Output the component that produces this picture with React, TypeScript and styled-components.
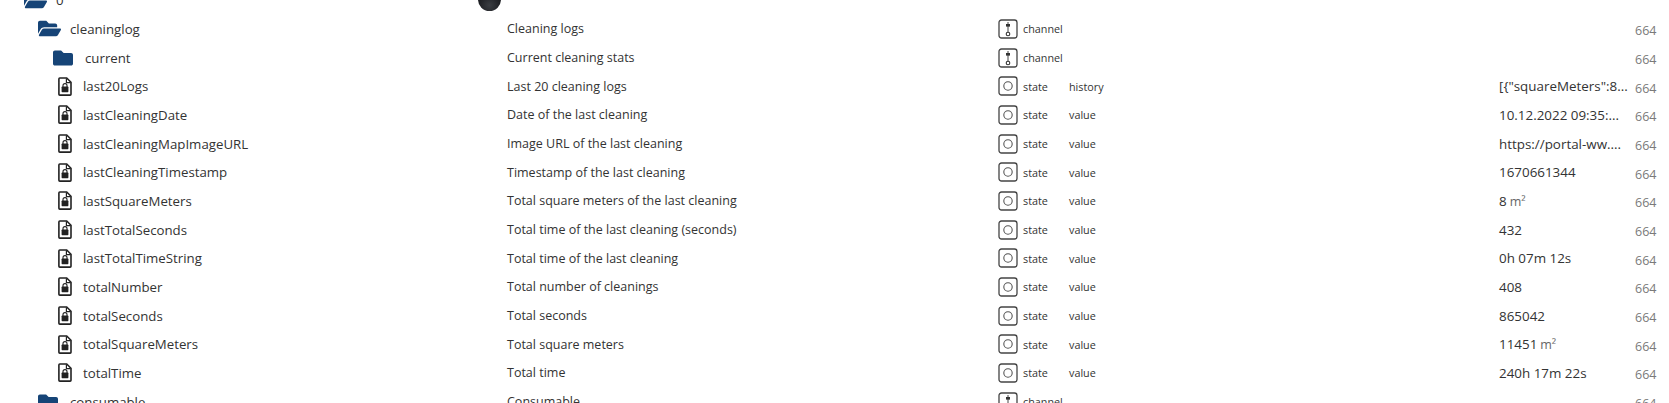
import React from "react";
import styled, { createGlobalStyle } from "styled-components";
import { FaFolder, FaFolderOpen } from "react-icons/fa";

type Row = {
  name: string;
  level: number;
  kind: "open" | "closed" | "state";
  desc?: string;
  type?: "channel" | "state";
  role?: string;
  value?: string;
  unit?: string;
};

const rows: Row[] = [
  { name: "0", level: 0, kind: "open" },
  { name: "cleaninglog", level: 1, kind: "open", desc: "Cleaning logs", type: "channel" },
  { name: "current", level: 2, kind: "closed", desc: "Current cleaning stats", type: "channel" },
  { name: "last20Logs", level: 2, kind: "state", desc: "Last 20 cleaning logs", type: "state", role: "history", value: '[{"squareMeters":8...' },
  { name: "lastCleaningDate", level: 2, kind: "state", desc: "Date of the last cleaning", type: "state", role: "value", value: "10.12.2022 09:35:..." },
  { name: "lastCleaningMapImageURL", level: 2, kind: "state", desc: "Image URL of the last cleaning", type: "state", role: "value", value: "https://portal-ww...." },
  { name: "lastCleaningTimestamp", level: 2, kind: "state", desc: "Timestamp of the last cleaning", type: "state", role: "value", value: "1670661344" },
  { name: "lastSquareMeters", level: 2, kind: "state", desc: "Total square meters of the last cleaning", type: "state", role: "value", value: "8", unit: "m²" },
  { name: "lastTotalSeconds", level: 2, kind: "state", desc: "Total time of the last cleaning (seconds)", type: "state", role: "value", value: "432" },
  { name: "lastTotalTimeString", level: 2, kind: "state", desc: "Total time of the last cleaning", type: "state", role: "value", value: "0h 07m 12s" },
  { name: "totalNumber", level: 2, kind: "state", desc: "Total number of cleanings", type: "state", role: "value", value: "408" },
  { name: "totalSeconds", level: 2, kind: "state", desc: "Total seconds", type: "state", role: "value", value: "865042" },
  { name: "totalSquareMeters", level: 2, kind: "state", desc: "Total square meters", type: "state", role: "value", value: "11451", unit: "m²" },
  { name: "totalTime", level: 2, kind: "state", desc: "Total time", type: "state", role: "value", value: "240h 17m 22s" },
  { name: "consumable", level: 1, kind: "closed", desc: "Consumable", type: "channel" },
];

const GlobalStyle = createGlobalStyle`
  html, body {
    margin: 0;
    height: 100%;
    overflow: hidden;
    background: #fff;
  }
  body {
    font-family: "Open Sans", "Liberation Sans", sans-serif;
    font-size: 12.5px;
    color: #333;
  }
`;

const Tree = styled.div`
  margin-top: -14px;
  height: 417px;
  overflow: hidden;
`;

const TreeRow = styled.div`
  display: grid;
  grid-template-columns: 507px 491px 71px 430px 136px 1fr;
  height: 28.66px;
  align-items: center;
  white-space: nowrap;
`;

const NameCell = styled.div<{ $indent: number; $gap: number }>`
  display: flex;
  align-items: center;
  padding-left: ${({ $indent }) => $indent}px;
  gap: ${({ $gap }) => $gap}px;
  font-size: 13.25px;
  position: relative;
`;

const Avatar = styled.div`
  position: absolute;
  left: 478px;
  top: 50%;
  margin-top: -12px;
  width: 23px;
  height: 23px;
  border-radius: 50%;
  background: radial-gradient(circle at 50% 75%, #3a3d42, #17181c 65%);
`;

const FolderIcon = styled.span`
  display: flex;
  color: #164477;
`;

const TypeCell = styled.div`
  display: flex;
  align-items: center;
  gap: 5px;
  font-size: 10.8px;
`;

const RoleCell = styled.div`
  font-size: 10.8px;
`;

const ValueCell = styled.div`
  font-size: 13.4px;
`;

const Unit = styled.span`
  margin-left: 3px;
  font-size: 12.5px;
  color: #666;
`;

const Count = styled.div`
  color: #7a7a7a;
  font-size: 12.5px;
  padding-top: 4px;
`;

const StateFile = () => (
  <svg width="14" height="19" viewBox="0 0 14 19" style={{ flex: "none" }}>
    <path
      d="M1.8 1h6.9L13 5.3v11.9a.9.9 0 0 1-.9.9H1.8a.9.9 0 0 1-.9-.9V1.9A.9.9 0 0 1 1.8 1z"
      fill="none"
      stroke="#222"
      strokeWidth="1.6"
    />
    <path d="M8.4 1.5v4.1h4.2" fill="none" stroke="#222" strokeWidth="1.2" />
    <rect x="3.6" y="9.6" width="6.8" height="5.6" rx=".7" fill="#222" />
    <path d="M5 10V8.6a2 2 0 0 1 4 0V10" fill="none" stroke="#222" strokeWidth="1.1" />
  </svg>
);

const TypeIcon = ({ type }: { type: "channel" | "state" }) => (
  <svg width="20" height="20" viewBox="0 0 20 20" style={{ flex: "none" }}>
    <rect x="1" y="1" width="18" height="18" rx="2.5" fill="none" stroke="#444" strokeWidth="1.3" />
    {type === "state" ? (
      <circle cx="10" cy="10" r="4.2" fill="none" stroke="#555" strokeWidth="1.1" />
    ) : (
      <>
        <path d="M10 3v10" stroke="#444" strokeWidth="1" />
        <rect x="8" y="5" width="4" height="2.6" fill="#333" />
        <circle cx="10" cy="15" r="1.8" fill="none" stroke="#333" strokeWidth="1.1" />
      </>
    )}
  </svg>
);

const nameLayout = (row: Row) => {
  if (row.kind === "state") return { indent: 58, gap: 11 };
  if (row.level === 0) return { indent: 24, gap: 9 };
  if (row.kind === "open") return { indent: 38, gap: 9 };
  if (row.level === 1) return { indent: 38, gap: 12 };
  return { indent: 53, gap: 12 };
};

const NodeIcon = ({ row }: { row: Row }) => {
  if (row.kind === "state") return <StateFile />;
  return (
    <FolderIcon>
      {row.kind === "open" ? <FaFolderOpen size={23} /> : <FaFolder size={20} />}
    </FolderIcon>
  );
};

export default function App() {
  return (
    <>
      <GlobalStyle />
      <Tree>
        {rows.map((row, index) => {
          const { indent, gap } = nameLayout(row);
          return (
            <TreeRow key={row.name}>
              <NameCell $indent={indent} $gap={gap}>
                <NodeIcon row={row} />
                {row.name}
                {index === 0 && <Avatar />}
              </NameCell>
              <div>{row.desc}</div>
              <TypeCell>
                {row.type && <TypeIcon type={row.type} />}
                {row.type}
              </TypeCell>
              <RoleCell>{row.role}</RoleCell>
              <ValueCell>
                {row.value}
                {row.unit && <Unit>{row.unit}</Unit>}
              </ValueCell>
              {index > 0 && <Count>664</Count>}
            </TreeRow>
          );
        })}
      </Tree>
    </>
  );
}
